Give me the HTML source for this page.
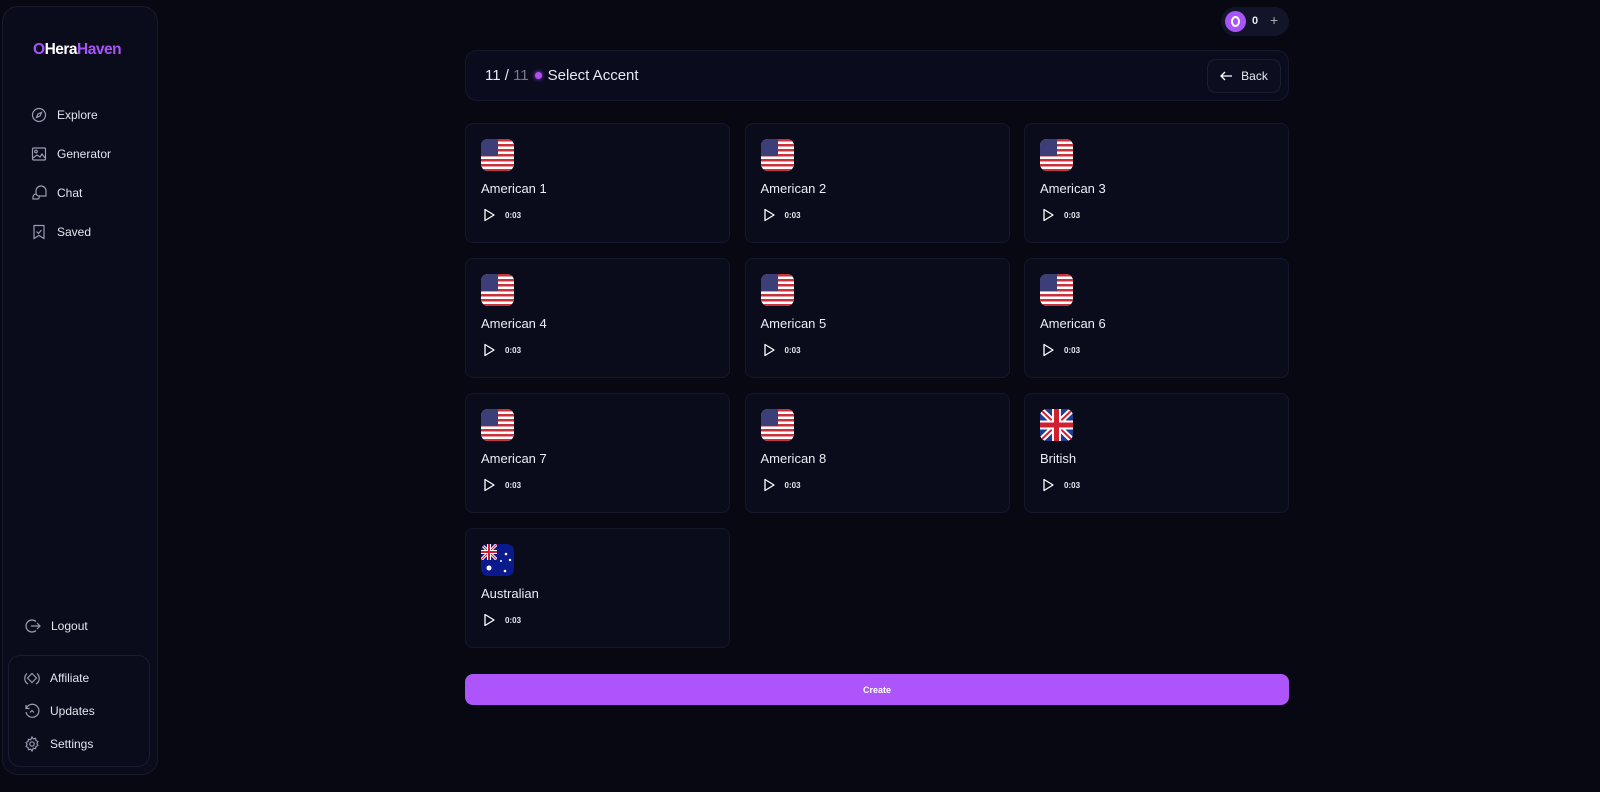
<!DOCTYPE html>
<html><head><meta charset="utf-8"><style>
*{box-sizing:border-box;margin:0;padding:0}
body{width:1600px;height:792px;background:#070812;font-family:"Liberation Sans",sans-serif;color:#e8e8f0;position:relative;overflow:hidden}
.side{position:absolute;left:2px;top:6px;width:156px;height:769px;background:#0a0c1c;border:1px solid #171a2e;border-radius:16px}
.logo{position:absolute;left:30px;top:34px;font-size:15.5px;font-weight:bold;letter-spacing:-0.5px}
.nav{position:absolute;left:30px;display:flex;align-items:center;gap:10px;font-size:12px;color:#e4e4ee}
.nav svg{width:16px;height:16px}
.box{position:absolute;left:8px;top:655px;width:142px;height:112px;border:1px solid #1a1d31;border-radius:12px}
.hdr{position:absolute;left:465px;top:50px;width:824px;height:51px;background:#0a0c1e;border:1px solid #15182c;border-radius:12px}
.back{position:absolute;right:7px;top:8px;width:74px;height:34px;border:1px solid #1b1e33;border-radius:9px;background:#0c0e20;font-size:12px;display:flex;align-items:center;justify-content:center;gap:8px}
.card{position:absolute;width:265px;height:120px;background:#0a0c1c;border:1px solid #15182b;border-radius:8px}
.card svg.f{position:absolute;left:15px;top:15px;width:33px;height:32px}
.card .n{position:absolute;left:15px;top:57px;font-size:13px;color:#eceef5}
.card .p{position:absolute;left:16px;top:84px;display:flex;align-items:center;gap:9px;font-size:8px;font-weight:bold}
.create{position:absolute;left:465px;top:674px;width:824px;height:31px;background:#ad55fa;border-radius:8px;font-size:9px;font-weight:bold;color:#fff;display:flex;align-items:center;justify-content:center}
.pill{position:absolute;left:1221px;top:7px;width:68px;height:29px;background:#12152a;border-radius:15px}
</style></head><body>
<svg width="0" height="0" style="position:absolute"><defs>
<clipPath id="rc"><rect width="33" height="32" rx="7"/></clipPath>
<g id="us"><g clip-path="url(#rc)"><rect width="33" height="32" fill="#fff"/>
<g fill="#c8323c"><rect y="0" width="33" height="2.5"/><rect y="5" width="33" height="2.5"/><rect y="10" width="33" height="2.5"/><rect y="15" width="33" height="2.5"/><rect y="20" width="33" height="2.5"/><rect y="25" width="33" height="2.5"/><rect y="30" width="33" height="2.5"/></g>
<rect width="17" height="17" fill="#3c3f77"/></g></g>
<g id="uk"><g clip-path="url(#rc)"><rect width="33" height="32" fill="#1f3a8f"/><path d="M0 0L33 32M33 0L0 32" stroke="#fff" stroke-width="6"/><path d="M0 0L33 32M33 0L0 32" stroke="#d0202f" stroke-width="2"/><path d="M16.5 0V32M0 16H33" stroke="#fff" stroke-width="9"/><path d="M16.5 0V32M0 16H33" stroke="#d0202f" stroke-width="5"/></g></g>
<g id="au"><g clip-path="url(#rc)"><rect width="33" height="32" fill="#0a1a8c"/>
<g clip-path="url(#q)"><path d="M0 0L16 16M16 0L0 16" stroke="#fff" stroke-width="3"/><path d="M0 0L16 16M16 0L0 16" stroke="#d0202f" stroke-width="1"/><path d="M8 0V16M0 8H16" stroke="#fff" stroke-width="4"/><path d="M8 0V16M0 8H16" stroke="#d0202f" stroke-width="2"/></g>
<g fill="#fff"><circle cx="8" cy="24" r="2.5"/><circle cx="25" cy="10" r="1.3"/><circle cx="29" cy="16" r="1.2"/><circle cx="24" cy="27" r="1.3"/><circle cx="20" cy="17" r="1"/></g></g></g>
<clipPath id="q"><rect width="16" height="16"/></clipPath>
</defs></svg>

<div class="side">
<div class="logo"><span style="color:#a855f7">O</span><span style="color:#fff">Hera</span><span style="color:#a855f7">Haven</span></div>
<div class="nav" style="top:100px;left:28px"><svg viewBox="0 0 16 16" fill="none" stroke="#9a9cb0" stroke-width="1.2"><circle cx="8" cy="8" r="6.5"/><path d="M10.5 5.5L9 9 5.5 10.5 7 7z"/></svg>Explore</div>
<div class="nav" style="top:139px;left:28px"><svg viewBox="0 0 16 16" fill="none" stroke="#9a9cb0" stroke-width="1.2"><rect x="1.5" y="2" width="13" height="12" rx="1"/><circle cx="5" cy="5.5" r="1.3"/><path d="M2 12l4-3 3 2 2-3 3 4"/></svg>Generator</div>
<div class="nav" style="top:178px;left:28px"><svg viewBox="0 0 16 16" fill="none" stroke="#9a9cb0" stroke-width="1.2"><path d="M5 6a5 5 0 0 1 10 0v5H8a3 3 0 0 1-3-3z"/><path d="M5 9a3 3 0 0 0-3 3v2h5a2 2 0 0 0 1-3"/></svg>Chat</div>
<div class="nav" style="top:217px;left:28px"><svg viewBox="0 0 16 16" fill="none" stroke="#9a9cb0" stroke-width="1.2"><path d="M3 1.5h10v13l-5-3-5 3z"/><path d="M5.5 7.5l2 2 3-3.5"/></svg>Saved</div>
<div class="nav" style="top:611px;left:22px"><svg viewBox="0 0 16 16" fill="none" stroke="#9a9cb0" stroke-width="1.2"><path d="M11 3.5A6 6 0 1 0 11 12.5"/><path d="M6 8h9M12 5l3 3-3 3"/></svg>Logout</div>
</div>
<div class="box">
<div class="nav" style="top:14px;left:15px"><svg viewBox="0 0 16 16" fill="none" stroke="#9a9cb0" stroke-width="1.2"><path d="M8 3.5L12.5 8 8 12.5 3.5 8z"/><path d="M3 3.5A6.5 6.5 0 0 0 4 14M13 3.5A6.5 6.5 0 0 1 12 14"/></svg>Affiliate</div>
<div class="nav" style="top:47px;left:15px"><svg viewBox="0 0 16 16" fill="none" stroke="#9a9cb0" stroke-width="1.2"><path d="M2.5 5A6.5 6.5 0 1 1 2 9"/><path d="M2 2v3.5h3.5M6 9.5l2-2 2 2"/></svg>Updates</div>
<div class="nav" style="top:80px;left:15px"><svg viewBox="0 0 16 16" fill="none" stroke="#9a9cb0" stroke-width="1.2"><circle cx="8" cy="8" r="2.2"/><path d="M8 1l1.3 1.8 2.2-.5.4 2.2 2 1-1 2 1 2-2 1-.4 2.2-2.2-.5L8 15l-1.3-1.8-2.2.5-.4-2.2-2-1 1-2-1-2 2-1 .4-2.2 2.2.5z"/></svg>Settings</div>
</div>

<div class="pill"><div style="position:absolute;left:4px;top:4px;width:21px;height:21px;border-radius:50%;background:#a855f7"><div style="position:absolute;left:6px;top:5px;width:9px;height:11px;border:2px solid #fff;border-radius:50%"></div></div><span style="position:absolute;left:31px;top:8px;font-size:11px;font-weight:bold">0</span><span style="position:absolute;left:49px;top:5px;font-size:14px;color:#aaa">+</span></div>

<div class="hdr"><div style="position:absolute;left:19px;top:16px;font-size:15px;display:flex;align-items:center;gap:6px"><span>11 / <span style="color:#777a8a">11</span></span><span style="width:7px;height:7px;border-radius:50%;background:#b44cf5;box-shadow:0 0 4px #b44cf5"></span><span>Select Accent</span></div>
<div class="back"><svg width="13" height="10" viewBox="0 0 13 10" fill="none" stroke="#fff" stroke-width="1.3"><path d="M12 5H1M5 1L1 5l4 4"/></svg>Back</div></div>

<div id="cards"></div>
<script>
const items=[["American 1","us"],["American 2","us"],["American 3","us"],["American 4","us"],["American 5","us"],["American 6","us"],["American 7","us"],["American 8","us"],["British","uk"],["Australian","au"]];
let h="";items.forEach((it,i)=>{const x=465+(i%3)*279.5,y=123+Math.floor(i/3)*135;
h+=`<div class="card" style="left:${x}px;top:${y}px"><svg class="f" viewBox="0 0 33 32"><use href="#${it[1]}"/></svg><div class="n">${it[0]}</div><div class="p"><svg width="14" height="14" viewBox="0 0 14 14" fill="none" stroke="#fff" stroke-width="1.3"><path d="M3 1.5L12 7 3 12.5z" stroke-linejoin="round"/></svg>0:03</div></div>`});
document.getElementById("cards").innerHTML=h;
</script>
<div class="create">Create</div>
</body></html>
